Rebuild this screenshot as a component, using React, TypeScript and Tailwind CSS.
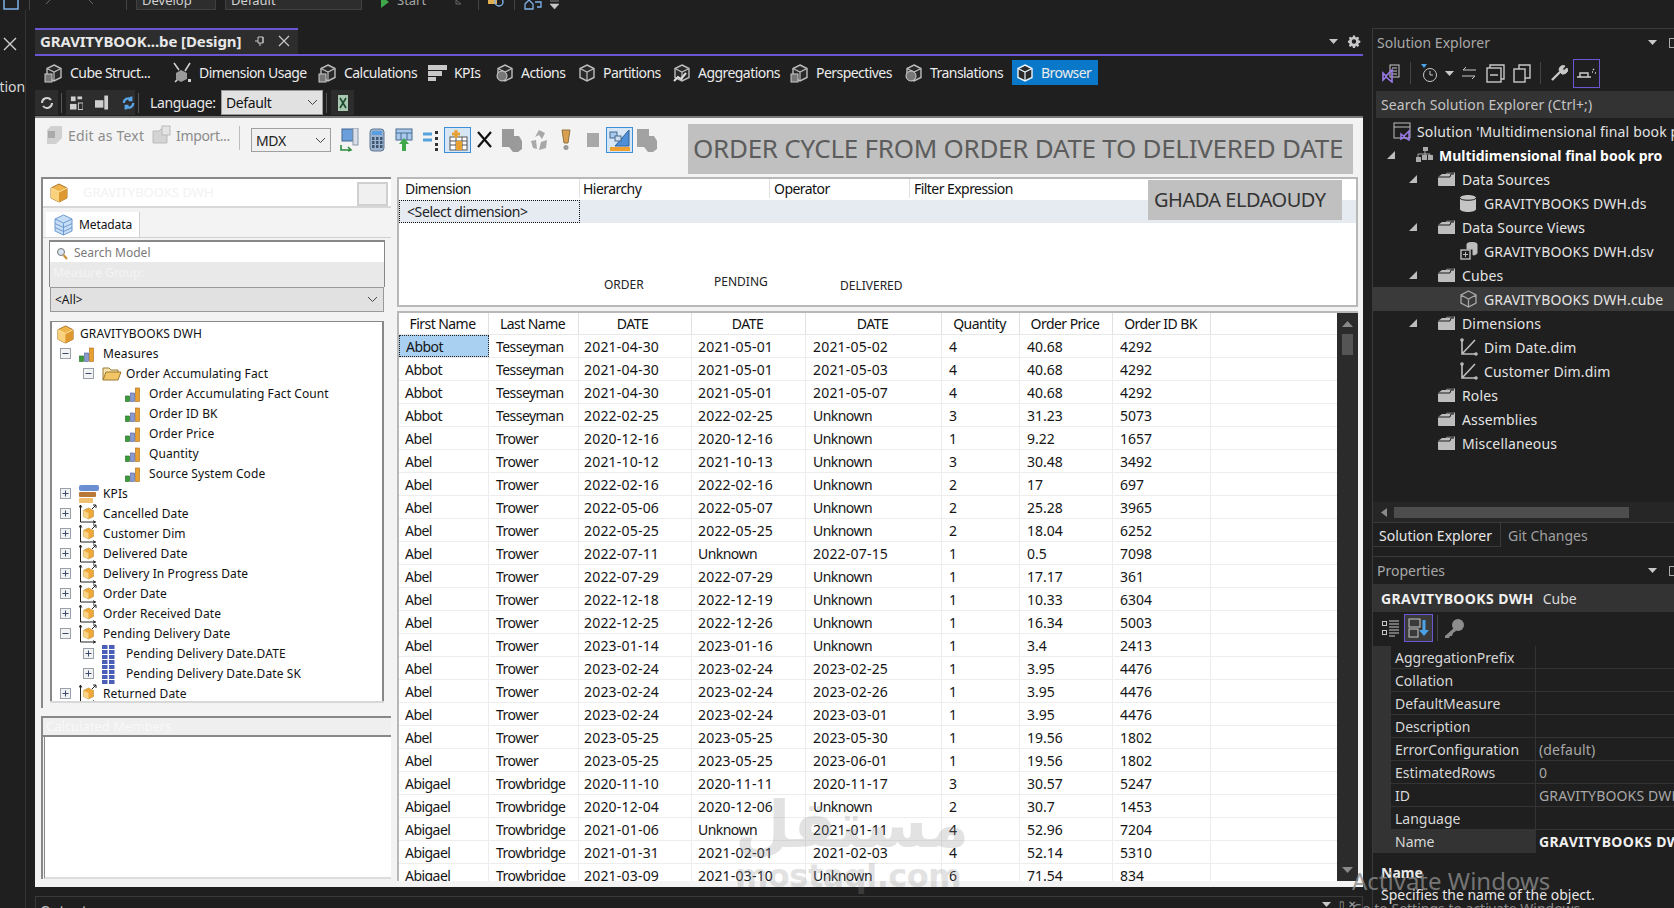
import React from "react";

const F = "font-['Noto_Sans','Open_Sans',sans-serif]";

const rowsRaw = `Abbot|Tesseyman|2021-04-30|2021-05-01|2021-05-02|4|40.68|4292
Abbot|Tesseyman|2021-04-30|2021-05-01|2021-05-03|4|40.68|4292
Abbot|Tesseyman|2021-04-30|2021-05-01|2021-05-07|4|40.68|4292
Abbot|Tesseyman|2022-02-25|2022-02-25|Unknown|3|31.23|5073
Abel|Trower|2020-12-16|2020-12-16|Unknown|1|9.22|1657
Abel|Trower|2021-10-12|2021-10-13|Unknown|3|30.48|3492
Abel|Trower|2022-02-16|2022-02-16|Unknown|2|17|697
Abel|Trower|2022-05-06|2022-05-07|Unknown|2|25.28|3965
Abel|Trower|2022-05-25|2022-05-25|Unknown|2|18.04|6252
Abel|Trower|2022-07-11|Unknown|2022-07-15|1|0.5|7098
Abel|Trower|2022-07-29|2022-07-29|Unknown|1|17.17|361
Abel|Trower|2022-12-18|2022-12-19|Unknown|1|10.33|6304
Abel|Trower|2022-12-25|2022-12-26|Unknown|1|16.34|5003
Abel|Trower|2023-01-14|2023-01-16|Unknown|1|3.4|2413
Abel|Trower|2023-02-24|2023-02-24|2023-02-25|1|3.95|4476
Abel|Trower|2023-02-24|2023-02-24|2023-02-26|1|3.95|4476
Abel|Trower|2023-02-24|2023-02-24|2023-03-01|1|3.95|4476
Abel|Trower|2023-05-25|2023-05-25|2023-05-30|1|19.56|1802
Abel|Trower|2023-05-25|2023-05-25|2023-06-01|1|19.56|1802
Abigael|Trowbridge|2020-11-10|2020-11-11|2020-11-17|3|30.57|5247
Abigael|Trowbridge|2020-12-04|2020-12-06|Unknown|2|30.7|1453
Abigael|Trowbridge|2021-01-06|Unknown|2021-01-11|4|52.96|7204
Abigael|Trowbridge|2021-01-31|2021-02-01|2021-02-03|4|52.14|5310
Abigael|Trowbridge|2021-03-09|2021-03-10|Unknown|6|71.54|834`;
const rows = rowsRaw.split("\n").map((r) => r.split("|"));
const colW = ["w-[90px]", "w-[90px]", "w-[113px]", "w-[114px]", "w-[136px]", "w-[78px]", "w-[93px]", "w-[98px]"];
const cellPl = ["pl-[6px]", "pl-[7px]", "pl-[5px]", "pl-[6px]", "pl-[7px]", "pl-[7px]", "pl-[7px]", "pl-[7px]"];
const heads = ["First Name", "Last Name", "DATE", "DATE", "DATE", "Quantity", "Order Price", "Order ID BK"];
const trackOf = (c: string) =>
  /^\d{4}-\d\d-\d\d$/.test(c) ? "tracking-[0.2px]" : /^[\d.]+$/.test(c) ? "tracking-[0px]" : "tracking-[-0.55px]";

/* ---------- icons ---------- */
const GoldCube = ({ s = 20 }: { s?: number }) => (
  <svg width={s} height={s} viewBox="0 0 20 20" className="shrink-0">
    <path d="M10 1 18 5v10l-8 4-8-4V5z" fill="#f0b54a" stroke="#a8762a" strokeWidth="1" />
    <path d="M2 5l8 4v10l-8-4z" fill="#fad27e" />
    <path d="M10 9l8-4v10l-8 4z" fill="#dd982f" />
    <path d="M2 5l8 4 8-4" fill="none" stroke="#fbe3a8" strokeWidth="1" />
  </svg>
);
const Bars = () => (
  <svg width="15" height="15" viewBox="0 0 15 15" className="shrink-0">
    <rect x="0.5" y="9" width="4" height="5.5" fill="#3c9a3c" stroke="#1c6a1c" strokeWidth="0.6" />
    <rect x="5.5" y="6" width="4" height="8.5" fill="#8a9ad0" stroke="#4d5d95" strokeWidth="0.6" />
    <rect x="10.5" y="1" width="4" height="13.5" fill="#e8a030" stroke="#a86a10" strokeWidth="0.6" />
  </svg>
);
const Folder = () => (
  <svg width="20" height="16" viewBox="0 0 20 16" className="shrink-0">
    <path d="M1 14V2h6l2 2h7v2" fill="#f7e3b0" stroke="#9a7a30" />
    <path d="M1 14 4 6h15l-3 8z" fill="#f4c566" stroke="#9a7a30" />
  </svg>
);
const KpiIcon = () => (
  <svg width="20" height="20" viewBox="0 0 20 20" className="shrink-0">
    <rect x="0" y="1" width="20" height="6" rx="2" fill="#6a8fd0" />
    <rect x="0" y="8" width="17" height="5" rx="1" fill="#b87838" />
    <rect x="0" y="14" width="14" height="5" rx="1" fill="#f0c070" />
  </svg>
);
const DimIcon = () => (
  <svg width="18" height="20" viewBox="0 0 18 20" className="shrink-0">
    <path d="M1.500 1v17h15M1.500 1 .2 3.500M1.500 1 2.800 3.500M16.500 18l-2.500-1.300M16.500 18l-2.500 1.300M13 5l4-4M14 1h3v3" fill="none" stroke="#222" strokeWidth="1" />
    <path d="M9.500 4l5 2.500v6l-5 2.500-5-2.500v-6z" fill="#eda93a" stroke="#b07a20" strokeWidth="0.5" />
    <path d="M4.500 6.500l5 2.500v6l-5-2.500z" fill="#f9d58a" />
  </svg>
);
const GridIcon = () => (
  <svg width="13" height="19" viewBox="0 0 13 19" className="shrink-0">
    {[0, 5, 10, 15].map((y) =>
      [0, 7].map((x) => <rect key={`${x}${y}`} x={x} y={y} width="5.5" height="4" fill="#4b5fb8" />)
    )}
  </svg>
);
const PM = ({ open }: { open?: boolean }) => (
  <svg width="11" height="11" viewBox="0 0 11 11" className="shrink-0">
    <rect x="0.5" y="0.5" width="10" height="10" fill="#f2f2f2" stroke="#9aa0a8" />
    <path d={open ? "M2.5 5.5h6" : "M2.5 5.5h6M5.5 2.5v6"} stroke="#3a4a70" />
  </svg>
);
const Chevron = () => (
  <svg width="11" height="7" viewBox="0 0 11 7" className="shrink-0">
    <path d="M1 1l4.5 4.5L10 1" fill="none" stroke="#444" />
  </svg>
);
const TabCube = ({ kind = 0, c = "#bdbdbd" }: { kind?: number; c?: string }) => (
  <svg width="20" height="20" viewBox="0 0 20 20" fill="none" stroke={c} className="shrink-0">
    <path d="M10 2l7 3.5v9L10 18l-7-3.5v-9z" fill="#2a2a2a" strokeWidth="1.4" />
    <path d="M3 5.5 10 9l7-3.5M10 9v9" strokeWidth="1.2" />
    {kind === 1 && <rect x="1" y="11" width="7" height="8" fill="#777" stroke="#ccc" />}
    {kind === 2 && <circle cx="7" cy="13" r="5" fill="#777" stroke="#ccc" />}
    {kind === 3 && <path d="M2 18l4-4 3 2 5-6" stroke="#ddd" strokeWidth="2" />}
  </svg>
);
const KpiTab = () => (
  <svg width="19" height="18" viewBox="0 0 19 18" className="shrink-0">
    <rect x="0" y="1" width="19" height="5" fill="#c8c8c8" />
    <rect x="0" y="7" width="14" height="5" fill="#c8c8c8" />
    <rect x="0" y="13" width="8" height="4" fill="#c8c8c8" />
  </svg>
);
const DimUsage = () => (
  <svg width="20" height="22" viewBox="0 0 20 22" fill="none" className="shrink-0">
    <path d="M1 1l5 7M17 1l-5 8M2 20l3-3" stroke="#cfcfcf" strokeWidth="1.6" />
    <path d="M8 8l6 3v6l-6 3-5-3v-6z" fill="#9a9a9a" />
    <rect x="15" y="17" width="3" height="3" fill="#cfcfcf" />
  </svg>
);
const SFolder = () => (
  <svg width="18" height="16" viewBox="0 0 18 16" className="shrink-0">
    <path d="M0 6 4 3h4l1-1.5h8V15H1a1 1 0 0 1-1-1z" fill="#bdbdbd" />
    <path d="M0 6h12l1-3h3" fill="none" stroke="#1f1f1f" />
    <path d="M9 2h7" stroke="#1f1f1f" />
  </svg>
);
const Tri = () => (
  <svg width="8" height="8" viewBox="0 0 8 8" className="shrink-0">
    <path d="M8 0v8H0z" fill="#bdbdbd" />
  </svg>
);
const DimFile = () => (
  <svg width="18" height="18" viewBox="0 0 18 18" fill="none" stroke="#bdbdbd" strokeWidth="1.6" className="shrink-0">
    <path d="M2 1v15h14M2 16 15 2" />
    <circle cx="2" cy="2" r="1" fill="#bdbdbd" />
    <circle cx="16" cy="16" r="1" fill="#bdbdbd" />
  </svg>
);
const Drop = ({ c = "#c8c8c8" }: { c?: string }) => (
  <svg width="9" height="5" viewBox="0 0 9 5" className="shrink-0">
    <path d="M0 0h9L4.5 5z" fill={c} />
  </svg>
);

/* toolbar icons on the light strip */
const TB = [
  <svg key="0" width="20" height="24" viewBox="0 0 20 24"><rect x="2" y="1" width="11" height="12" fill="#6a9fdc" stroke="#44668f" /><rect x="13" y="0" width="5" height="17" fill="#d8dfe8" stroke="#8a97a8" /><path d="M1 17v5h10M8 19l3 3-3 1" fill="none" stroke="#2e8a3c" strokeWidth="1.6" /></svg>,
  <svg key="1" width="16" height="24" viewBox="0 0 16 24"><rect x="1" y="1" width="14" height="22" rx="3" fill="#9cb4d0" stroke="#5f7690" /><rect x="3" y="3" width="10" height="4" fill="#5a9ee0" />{[9, 13, 17].map((y) => [3, 7, 11].map((x) => <rect key={`${x}${y}`} x={x} y={y} width="2.5" height="3" fill="#405670" />))}</svg>,
  <svg key="2" width="18" height="24" viewBox="0 0 18 24"><rect x="1" y="1" width="16" height="11" fill="#a8c8ec" stroke="#4b6d92" /><path d="M1 5h16M6 5v7M12 5v7" stroke="#4b6d92" /><path d="M9 10l5 6h-3v7H7v-7H4z" fill="#3ea84a" /></svg>,
  <svg key="3" width="18" height="22" viewBox="0 0 18 22"><path d="M1 5h9M1 11h9" stroke="#55a3dc" strokeWidth="3" /><rect x="13" y="2" width="3" height="3" fill="#333" /><rect x="13" y="8" width="3" height="3" fill="#333" /><rect x="13" y="14" width="3" height="3" fill="#333" /><rect x="13" y="19" width="3" height="3" fill="#333" /></svg>,
  <svg key="4" width="20" height="22" viewBox="0 0 20 22"><rect x="2" y="8" width="17" height="13" fill="#fff" stroke="#555" /><path d="M2 12h17M2 16h17M8 8v13M14 8v13" stroke="#555" /><rect x="8" y="12" width="6" height="9" fill="#e8a030" /><path d="M8 1v8M4 5h8" stroke="#e8a030" strokeWidth="3" /></svg>,
  <svg key="5" width="17" height="22" viewBox="0 0 17 22"><path d="M2 3l13 15M15 3 2 18" stroke="#111" strokeWidth="2.2" /></svg>,
  <svg key="6" width="22" height="26" viewBox="0 0 22 26"><path d="M1 2h12v7h5l3 5v8l-4 3h-5l-4-5H1z" fill="#9a9a9a" /></svg>,
  <svg key="7" width="20" height="24" viewBox="0 0 20 24"><path d="M10 2l6 3-3 6-3-4-4 2zM2 13l5-1 1 9-4-1zM10 22l2-8 6-2-1 8z" fill="#a8a8a8" /></svg>,
  <svg key="8" width="10" height="22" viewBox="0 0 10 22"><path d="M1 1h8l-2 13H3z" fill="#d8a050" stroke="#90733f" /><circle cx="5" cy="18.5" r="2.5" fill="#9a9a9a" /></svg>,
  <svg key="9" width="12" height="14" viewBox="0 0 12 14"><rect width="12" height="14" fill="#a8a8a8" /></svg>,
  <svg key="10" width="22" height="24" viewBox="0 0 22 24"><path d="M20 2v16H6z" fill="#4e8fd8" stroke="#2d5f96" /><rect x="1" y="4" width="7" height="6" fill="#a8c8ec" stroke="#44668f" /><rect x="6" y="8" width="6" height="5" fill="#d0dff0" stroke="#44668f" /><rect x="1" y="19" width="20" height="4" fill="#f0a030" /></svg>,
  <svg key="11" width="22" height="26" viewBox="0 0 22 26"><path d="M1 2h12v7h5l3 5v8l-4 3h-5l-4-5H1z" fill="#a2a2a2" /></svg>,
];

const TreeRow = ({ indent, pm, icon, text }: { indent: number; pm?: "o" | "c"; icon: React.ReactNode; text: string }) => (
  <div className="h-[20px] flex items-center relative shrink-0" style={{ paddingLeft: indent }}>
    {pm && <span className="absolute top-[4px] -ml-[19px]"><PM open={pm === "o"} /></span>}
    <span className="w-[24px] h-[20px] flex items-center shrink-0">{icon}</span>
    <span className="text-[12px] tracking-[0.1px] text-[#111] whitespace-nowrap">{text}</span>
  </div>
);

const SRow = ({ pl, tri, icon, text, bold, hl }: { pl: number; tri?: number; icon: React.ReactNode; text: string; bold?: boolean; hl?: boolean }) => (
  <div className={`h-[24px] flex items-center relative whitespace-nowrap ${hl ? "bg-[#3a3a3a]" : ""}`} style={{ paddingLeft: pl }}>
    {tri !== undefined && <span className="absolute top-[8px]" style={{ left: tri }}><Tri /></span>}
    <span className="w-[24px] flex items-center shrink-0">{icon}</span>
    <span className={`text-[14px] ${bold ? "font-bold text-white" : "text-[#e4e4e4] tracking-[0.15px]"}`}>{text}</span>
  </div>
);

const DTab = ({ w, icon, text, active }: { w: string; icon: React.ReactNode; text: string; active?: boolean }) => (
  <div className={`${w} h-[25px] flex items-center shrink-0 ${active ? "bg-[#0a78c8] pl-[3px]" : ""}`}>
    <span className="w-[26px] flex items-center shrink-0">{icon}</span>
    <span className="text-[14px] tracking-[-0.55px] text-[#ececec] whitespace-nowrap">{text}</span>
  </div>
);

export default function App() {
  const props: [string, string][] = [
    ["AggregationPrefix", ""],
    ["Collation", ""],
    ["DefaultMeasure", ""],
    ["Description", ""],
    ["ErrorConfiguration", "(default)"],
    ["EstimatedRows", "0"],
    ["ID", "GRAVITYBOOKS DWH"],
    ["Language", ""],
  ];
  return (
    <div className={`${F} w-[1674px] h-[908px] bg-[#1f1f1f] overflow-hidden relative flex flex-col`}>
      {/* top command bar */}
      <div className="h-[10px] shrink-0 flex items-end relative overflow-hidden">
        <svg width="18" height="10" viewBox="0 0 18 10" className="ml-[3px] shrink-0"><rect x="1" y="-8" width="14" height="17" fill="none" stroke="#7fb2e8" strokeWidth="1.5" /></svg>
        <span className="w-px h-[10px] bg-[#444] ml-[8px]" />
        <svg width="8" height="8" viewBox="0 0 8 8" className="ml-[15px] self-start shrink-0"><path d="M1 4l4-4" stroke="#666" /></svg>
        <svg width="8" height="8" viewBox="0 0 8 8" className="ml-[33px] self-start shrink-0"><path d="M7 4 3 0" stroke="#666" /></svg>
        <span className="w-px h-[10px] bg-[#444] ml-[32px]" />
        <div className="ml-[9px] w-[80px] h-[10px] bg-[#2d2d2d] border-b border-x border-[#404040] relative"><span className="absolute left-[5px] -top-[9px] text-[13px] text-[#d0d0d0]">Develop</span></div>
        <div className="ml-[9px] w-[137px] h-[10px] bg-[#2d2d2d] border-b border-x border-[#404040] relative"><span className="absolute left-[5px] -top-[9px] text-[13px] text-[#d0d0d0]">Default</span></div>
        <div className="ml-[15px] w-[78px] h-[10px] relative shrink-0"><svg width="10" height="10" viewBox="0 0 10 10" className="absolute top-0 left-[3px]"><path d="M1 -4l8 6-8 6z" fill="#3ea84a" /></svg><span className="absolute left-[20px] -top-[9px] text-[13px] text-[#a8a8a8]">Start</span></div>
        <svg width="8" height="8" viewBox="0 0 8 8" className="self-start shrink-0"><path d="M1 0l5 4H1z" fill="none" stroke="#666" /></svg>
        <span className="w-px h-[10px] bg-[#444] ml-[15px]" />
        <svg width="18" height="10" viewBox="0 0 18 10" className="ml-[8px] shrink-0"><rect x="1" y="-4" width="9" height="8" fill="#e0b050" /><circle cx="12" cy="2" r="4" fill="none" stroke="#7fb2e8" strokeWidth="1.4" /></svg>
        <span className="w-px h-[10px] bg-[#444] ml-[9px]" />
        <svg width="18" height="10" viewBox="0 0 18 10" className="ml-[9px] shrink-0"><path d="M1 4l4-4 4 4v5H1zM11 2h6v5h-4" fill="none" stroke="#7fb2e8" strokeWidth="1.3" /></svg>
        <svg width="9" height="10" viewBox="0 0 9 10" className="ml-[8px] shrink-0"><path d="M0 1h9M0 4h9l-4.500 5z" fill="#c8c8c8" stroke="#c8c8c8" strokeWidth="0.6" /></svg>
      </div>

      <div className="flex flex-1 min-h-0 pt-[18px]">
        {/* left collapsed tool strip */}
        <div className="w-[26px] shrink-0 border-r border-[#333] flex flex-col text-[#d8d8d8] overflow-hidden -mt-[18px] pt-[27px]">
          <svg width="14" height="14" viewBox="0 0 14 14" className="ml-[3px] shrink-0"><path d="M1 1l12 12M13 1 1 13" stroke="#d0d0d0" strokeWidth="1.4" /></svg>
          <span className="text-[14px] -ml-[29px] whitespace-nowrap mt-[25px]">Solution</span>
        </div>
        <div className="w-[9px] shrink-0" />

        {/* centre document */}
        <div className="w-[1328px] shrink-0 flex flex-col">
          <div className="h-[26px] shrink-0 flex">
            <div className="w-[263px] bg-[#2d2d2d] border-t-2 border-[#6b57d6] flex items-center pl-[5px] pb-[2px]">
              <span className="text-[15px] font-bold text-[#e8e8e8] tracking-[-0.1px] whitespace-nowrap">GRAVITYBOOK...be [Design]</span>
              <svg width="12" height="12" viewBox="0 0 12 12" className="ml-[13px] shrink-0"><path d="M4 2h5v6H4zM1 6h3M6 8v3M9 2v6" fill="none" stroke="#c8c8c8" /></svg>
              <svg width="12" height="12" viewBox="0 0 12 12" className="ml-[12px] shrink-0"><path d="M1 1l10 10M11 1 1 11" stroke="#c8c8c8" strokeWidth="1.2" /></svg>
            </div>
            <div className="flex-1 flex items-center justify-end pr-[2px] gap-[10px]">
              <Drop />
              <svg width="13" height="13" viewBox="0 0 24 24" fill="#c8c8c8"><path d="M10 1h4l.6 3 2.400 1 2.600-1.700 2.800 2.800L20.700 8.700l1 2.300 3 .6v4l-3 .6-1 2.400 1.700 2.600-2.800 2.800-2.600-1.700-2.400 1-.6 3h-4l-.6-3-2.400-1-2.600 1.700-2.800-2.800 1.700-2.600-1-2.400-3-.6v-4l3-.6 1-2.300L1.600 6.100l2.800-2.800L7 5l2.400-1zM12 8.500a4.500 4.500 0 1 0 0 9 4.500 4.500 0 0 0 0-9z" transform="scale(.92)" /></svg>
            </div>
          </div>
          <div className="h-[2px] shrink-0 bg-[#6b57d6]" />

          {/* designer tabs */}
          <div className="h-[34px] shrink-0 flex items-start pt-[4px] pl-[9px]">
            <DTab w="w-[129px]" icon={<TabCube kind={1} />} text="Cube Struct..." />
            <DTab w="w-[145px]" icon={<DimUsage />} text="Dimension Usage" />
            <DTab w="w-[110px]" icon={<TabCube kind={1} />} text="Calculations" />
            <DTab w="w-[67px]" icon={<KpiTab />} text="KPIs" />
            <DTab w="w-[82px]" icon={<TabCube kind={2} />} text="Actions" />
            <DTab w="w-[95px]" icon={<TabCube />} text="Partitions" />
            <DTab w="w-[118px]" icon={<TabCube kind={3} />} text="Aggregations" />
            <DTab w="w-[114px]" icon={<TabCube kind={1} />} text="Perspectives" />
            <DTab w="w-[108px]" icon={<TabCube kind={2} />} text="Translations" />
            <DTab w="w-[86px]" icon={<TabCube c="#e8f4ff" />} text="Browser" active />
          </div>

          {/* language row */}
          <div className="h-[26px] shrink-0 flex items-center pb-[1px]">
            <div className="w-[23px] h-[25px] bg-[#2d2d2d] flex items-center justify-center"><svg width="16" height="16" viewBox="0 0 16 16" fill="none" stroke="#cfcfcf" strokeWidth="2"><path d="M3 8a5 5 0 0 1 9-3M13 8a5 5 0 0 1-9 3" /></svg></div>
            <span className="w-px h-[20px] bg-[#555] ml-[3px]" />
            <div className="ml-[4px] w-[69px] h-[25px] bg-[#2d2d2d] flex items-center gap-[12px] pl-[4px]">
              <svg width="14" height="16" viewBox="0 0 14 16" fill="#cfcfcf"><rect x="1" y="1" width="5" height="5" /><rect x="8" y="1" width="5" height="3" /><rect x="0" y="9" width="7" height="6" /><rect x="9" y="8" width="5" height="7" fill="none" stroke="#cfcfcf" /></svg>
              <svg width="16" height="18" viewBox="0 0 16 18" fill="#cfcfcf"><rect x="0" y="6" width="9" height="8" /><rect x="10" y="1" width="4" height="15" /></svg>
              <svg width="14" height="16" viewBox="0 0 14 16" fill="none" stroke="#58a6e8" strokeWidth="2.400"><path d="M2 8a5 5 0 0 1 8-4M12 8a5 5 0 0 1-8 4M10 1v4h-3M4 15v-4h3" /></svg>
            </div>
            <span className="w-px h-[20px] bg-[#555] ml-[3px]" />
            <span className="ml-[11px] text-[14px] tracking-[-0.4px] text-[#e8e8e8] whitespace-nowrap w-[71px]">Language:</span>
            <div className="w-[102px] h-[25px] bg-[#e1e1e1] flex items-center justify-between px-[4px] text-[14px] tracking-[-0.4px] text-[#111] border border-[#999]">Default<Chevron /></div>
            <span className="w-px h-[20px] bg-[#555] ml-[3px]" />
            <div className="ml-[4px] w-[23px] h-[25px] bg-[#2d2d2d] flex items-center justify-center"><svg width="10" height="16" viewBox="0 0 10 16"><rect width="10" height="16" fill="#a8c8b0" /><path d="M2 3l6 10M8 3 2 13" stroke="#1c4a30" strokeWidth="1.6" /></svg></div>
          </div>

          {/* white designer surface */}
          <div className="h-[771px] shrink-0 bg-[#f3f3f3] border-t-2 border-[#7a7a7a] flex flex-col relative">
            {/* browser toolbar */}
            <div className="h-[59px] shrink-0 flex items-start pl-[10px] pt-[8px] text-[14px] text-[#8c8c8c]">
              <div className="flex items-center h-[20px] w-[194px] -mt-[1px]">
                <svg width="18" height="20" viewBox="0 0 18 20" className="shrink-0"><path d="M6 1h11v12l-6 6H2V5z" fill="#d0d0d0" /><rect x="3" y="6" width="7" height="7" fill="#aaa" /></svg>
                <span className="ml-[5px] w-[84px] tracking-[0.2px] whitespace-nowrap">Edit as Text</span>
                <svg width="20" height="20" viewBox="0 0 20 20" className="shrink-0"><path d="M1 18V6h6l2-2h6v14z" fill="#d4d4d4" stroke="#bbb" /><rect x="10" y="1" width="8" height="9" fill="#e4e4e4" stroke="#bbb" /></svg>
                <span className="ml-[4px] tracking-[-0.35px] whitespace-nowrap">Import...</span>
              </div>
              <span className="w-px h-[24px] bg-[#bcbcbc]" />
              <div className="ml-[11px] mt-[2px] w-[80px] h-[24px] border border-[#a0a0a0] bg-[#f0f0f0] flex items-center justify-between px-[4px] text-[#222] tracking-[-0.35px]">MDX<Chevron /></div>
              <div className="flex ml-[5px] h-[28px] mt-[1px]">
                {TB.map((ic, i) => (
                  <div key={i} className={`w-[27px] h-[26px] flex items-center justify-center shrink-0 ${i === 4 || i === 10 ? "border border-[#3b8fd8] bg-[#d6e6f5]" : ""}`}>{ic}</div>
                ))}
              </div>
            </div>

            <div className="flex flex-1 min-h-0 pl-[6px] pr-[5px] pb-[6px]">
              {/* left metadata column */}
              <div className="w-[350px] shrink-0 flex flex-col">
                <div className="h-[531px] shrink-0 border-2 border-[#888] border-b-0 border-r-0 flex flex-col relative">
                  <div className="h-[29px] bg-white border-b-2 border-[#d8d8d8] flex items-center pl-[6px] relative shrink-0">
                    <GoldCube s={20} />
                    <span className="ml-[14px] text-[13px] text-[#f2f2f2]">GRAVITYBOOKS DWH</span>
                    <div className="absolute right-[3px] top-[3px] w-[31px] h-[24px] border-2 border-[#d0d0d0] bg-[#f0f0f0]" />
                  </div>
                  <div className="h-[4px] shrink-0" />
                  <div className="h-[26px] shrink-0 flex border-b border-[#d0d0d0] pl-[3px]">
                    <div className="w-[94px] bg-white flex items-center pl-[8px] gap-[6px] border-r border-[#d0d0d0]">
                      <svg width="19" height="22" viewBox="0 0 19 22"><path d="M9.500 1 18 5v12l-8.500 4L1 17V5z" fill="#c6def6" stroke="#6d9ad0" /><path d="M1 5l8.500 4L18 5M1 9.500l8.500 4 8.500-4M1 13.500l8.500 4 8.500-4M9.500 9v12" fill="none" stroke="#6d9ad0" /></svg>
                      <span className="text-[12px] tracking-[-0.1px] text-[#111]">Metadata</span>
                    </div>
                  </div>
                  <div className="mx-[6px] mt-[2px] h-[47px] shrink-0 border-t-2 border-x border-[#888] bg-[#e9e9e9] flex flex-col">
                    <div className="h-[20px] bg-white flex items-center pl-[6px] pt-[2px] gap-[6px] shrink-0">
                      <svg width="12" height="13" viewBox="0 0 12 13" fill="none"><circle cx="5" cy="5" r="3.500" stroke="#777" fill="#d8e4f0" /><path d="M7.500 8l3.500 4" stroke="#c99030" strokeWidth="2" /></svg>
                      <span className="text-[12px] text-[#7a7a7a]">Search Model</span>
                    </div>
                    <span className="text-[12px] text-[#f4f4f4] pl-[3px] pt-[2px]">Measure Group:</span>
                  </div>
                  <div className="mx-[7px] h-[25px] shrink-0 bg-[#e1e1e1] border border-[#999] flex items-center justify-between pl-[4px] pr-[5px] text-[12px] text-[#111]">&lt;All&gt;<Chevron /></div>
                  <div className="h-[9px] shrink-0" />
                  <div className="mx-[7px] flex-1 min-h-0 bg-white border-x-2 border-t border-[#888] border-b-0 overflow-hidden flex flex-col pt-[2px]">
                    <TreeRow indent={4} icon={<GoldCube s={19} />} text="GRAVITYBOOKS DWH" />
                    <TreeRow indent={27} pm="o" icon={<Bars />} text="Measures" />
                    <TreeRow indent={50} pm="o" icon={<Folder />} text="Order Accumulating Fact" />
                    <TreeRow indent={73} icon={<Bars />} text="Order Accumulating Fact Count" />
                    <TreeRow indent={73} icon={<Bars />} text="Order ID BK" />
                    <TreeRow indent={73} icon={<Bars />} text="Order Price" />
                    <TreeRow indent={73} icon={<Bars />} text="Quantity" />
                    <TreeRow indent={73} icon={<Bars />} text="Source System Code" />
                    <TreeRow indent={27} pm="c" icon={<KpiIcon />} text="KPIs" />
                    <TreeRow indent={27} pm="c" icon={<DimIcon />} text="Cancelled Date" />
                    <TreeRow indent={27} pm="c" icon={<DimIcon />} text="Customer Dim" />
                    <TreeRow indent={27} pm="c" icon={<DimIcon />} text="Delivered Date" />
                    <TreeRow indent={27} pm="c" icon={<DimIcon />} text="Delivery In Progress Date" />
                    <TreeRow indent={27} pm="c" icon={<DimIcon />} text="Order Date" />
                    <TreeRow indent={27} pm="c" icon={<DimIcon />} text="Order Received Date" />
                    <TreeRow indent={27} pm="o" icon={<DimIcon />} text="Pending Delivery Date" />
                    <TreeRow indent={50} pm="c" icon={<GridIcon />} text="Pending Delivery Date.DATE" />
                    <TreeRow indent={50} pm="c" icon={<GridIcon />} text="Pending Delivery Date.Date SK" />
                    <TreeRow indent={27} pm="c" icon={<DimIcon />} text="Returned Date" />
                  </div>
                  <div className="mx-[7px] h-[2px] bg-[#d8d8d8] shrink-0" />
                  <div className="h-[5px] shrink-0" />
                </div>
                <div className="h-[8px] shrink-0" />
                <div className="h-[163px] shrink-0 border-2 border-[#888] border-r-0 border-b-0 flex flex-col">
                  <div className="h-[19px] shrink-0 bg-[#efefef] text-[13px] leading-[17px] text-[#f8f8f8] pl-[3px] border-b-2 border-[#888] overflow-hidden">Calculated Members</div>
                  <div className="flex-1 bg-white ml-[1px] border-l border-[#888] border-b-2 border-b-[#ddd]" />
                </div>
              </div>

              <div className="w-[6px] shrink-0" />

              {/* right column */}
              <div className="w-[961px] shrink-0 flex flex-col">
                <div className="h-[130px] shrink-0 bg-white border-2 border-[#b8b8b8] flex flex-col relative">
                  <div className="h-[21px] shrink-0 flex items-center text-[14px] tracking-[-0.55px] text-[#111] pb-[2px]">
                    <span className="w-[181px] pl-[6px] border-r border-[#e0e0e0] h-full flex items-center">Dimension</span>
                    <span className="w-[190px] pl-[3px] border-r border-[#e0e0e0] h-full flex items-center">Hierarchy</span>
                    <span className="w-[140px] pl-[4px] border-r border-[#e0e0e0] h-full flex items-center">Operator</span>
                    <span className="pl-[4px]">Filter Expression</span>
                  </div>
                  <div className="h-[23px] shrink-0 bg-[#e6ebf2] flex">
                    <div className="w-[181px] border border-dotted border-[#111] pl-[7px] text-[14px] tracking-[-0.4px] text-[#222] flex items-center">&lt;Select dimension&gt;</div>
                  </div>
                  <span className="absolute left-[205px] top-[97px] text-[12px] text-[#222]">ORDER</span>
                  <span className="absolute left-[315px] top-[94px] text-[12px] text-[#222]">PENDING</span>
                  <span className="absolute left-[441px] top-[98px] text-[12px] text-[#222]">DELIVERED</span>
                </div>
                <div className="h-[4px] shrink-0" />

                <div className="flex-1 min-h-0 flex bg-white border-t-2 border-l-2 border-[#b8b8b8] relative overflow-hidden">
                  <div className="flex-1 min-w-0 overflow-hidden flex flex-col">
                    <div className="h-[22px] flex shrink-0 border-b border-[#e8e8e8]">
                      {heads.map((h, i) => (
                        <div key={i} className={`${colW[i]} shrink-0 flex items-center justify-center text-[14px] tracking-[-0.55px] text-[#111] border-r border-[#e0e0e0] ${i === 2 ? "pr-[5px]" : "pr-[2px]"}`}>{h}</div>
                      ))}
                    </div>
                    {rows.map((r, ri) => (
                      <div key={ri} className="h-[23px] flex shrink-0 border-b border-[#ededed]">
                        {r.map((c, ci) => (
                          <div key={ci} className={`${colW[ci]} ${cellPl[ci]} ${trackOf(c)} shrink-0 flex items-center text-[14px] text-[#151515] whitespace-nowrap ${ri === 0 && ci === 0 ? "bg-[#a9d0f1] border border-dotted border-[#222]" : "border-r border-[#ededed]"}`}>{c}</div>
                        ))}
                      </div>
                    ))}
                  </div>
                  <div className="w-[21px] shrink-0 bg-[#2b2b2b] flex flex-col items-center relative">
                    <svg width="11" height="6" viewBox="0 0 11 6" className="mt-[8px]"><path d="M5.500 0 11 6H0z" fill="#888" /></svg>
                    <div className="w-[11px] h-[21px] bg-[#555] mt-[7px]" />
                    <div className="flex-1" />
                    <svg width="11" height="6" viewBox="0 0 11 6" className="mb-[8px]"><path d="M5.500 6 11 0H0z" fill="#888" /></svg>
                  </div>
                </div>
              </div>
            </div>
          </div>

          <div className="h-[9px] shrink-0" />
          <div className="flex-1 border-t border-x border-[#3a3a3a] flex justify-between items-start pl-[4px] pr-[6px] overflow-hidden text-[#c8c8c8]">
            <span className="text-[14px] mt-[3px]">Output</span>
            <span className="flex gap-[8px] items-center"><Drop /><span className="text-[10px] text-[#aaa]">▯ ✕</span></span>
          </div>
        </div>

        <div className="w-[9px] shrink-0" />

        {/* right tool windows */}
        <div className="flex-1 min-w-0 flex flex-col border-l border-[#3a3a3a] border-t overflow-hidden">
          <div className="h-[29px] shrink-0 flex items-center pl-[4px] pb-[2px] justify-between whitespace-nowrap">
            <span className="text-[14px] text-[#a8a8a8]">Solution Explorer</span>
            <span className="flex items-center gap-[12px]"><Drop /><span className="w-[5px] h-[10px] border border-[#aaa] border-r-0" /></span>
          </div>
          <div className="h-[30px] shrink-0 flex items-center pl-[8px] mb-[3px]">
            <svg width="20" height="20" viewBox="0 0 20 20" fill="none" className="shrink-0"><rect x="9" y="2" width="9" height="12" stroke="#c8c8c8" /><path d="M11 5h5M11 8h5M11 11h5" stroke="#c8c8c8" /><path d="M2 10l3 3 6-6v12l-6-5-3 3z" stroke="#9b7bea" strokeWidth="1.600" /></svg>
            <span className="w-px h-[22px] bg-[#444] ml-[9px]" />
            <svg width="18" height="20" viewBox="0 0 18 20" fill="none" className="ml-[9px] shrink-0"><circle cx="10" cy="12" r="6.500" stroke="#c8c8c8" /><path d="M10 8v4h3" stroke="#c8c8c8" /><path d="M1 1h6L4 5z" fill="#4aa3e8" /></svg>
            <span className="ml-[7px]"><Drop /></span>
            <svg width="16" height="12" viewBox="0 0 16 12" fill="none" stroke="#c8c8c8" className="ml-[7px] shrink-0"><path d="M15 3H2l3-3M1 9h13l-3 3" /></svg>
            <svg width="19" height="19" viewBox="0 0 19 19" fill="none" stroke="#c8c8c8" strokeWidth="1.400" className="ml-[9px] shrink-0"><rect x="1" y="4" width="14" height="14" /><path d="M4 4V1h14v14h-3M4 11h8" /></svg>
            <svg width="18" height="19" viewBox="0 0 18 19" fill="none" stroke="#c8c8c8" strokeWidth="1.400" className="ml-[8px] shrink-0"><rect x="1" y="5" width="11" height="13" /><path d="M6 5V1h11v13h-5" /></svg>
            <span className="w-px h-[22px] bg-[#444] ml-[9px]" />
            <svg width="18" height="18" viewBox="0 0 18 18" fill="none" stroke="#c8c8c8" strokeWidth="2.400" className="ml-[9px] shrink-0"><path d="M2 16 10 8" /><path d="M10 8a4 4 0 0 1 5-6l-2.500 3 1.500 1.500L17 4a4 4 0 0 1-7 4z" fill="#c8c8c8" strokeWidth="1" /></svg>
            <div className="ml-[5px] w-[27px] h-[29px] border border-[#6b57d6] flex items-center justify-center shrink-0"><svg width="21" height="12" viewBox="0 0 21 12" fill="none" stroke="#d0d0d0"><path d="M1 10h14M4 10V6h8v4M17 2l1 1M19 6h1M16 5l1 0" strokeWidth="1.400" /></svg></div>
          </div>
          <div className="h-[27px] shrink-0 ml-[3px] bg-[#333333] flex items-center pl-[5px] text-[14px] tracking-[0.1px] text-[#c4c4c4] whitespace-nowrap">Search Solution Explorer (Ctrl+;)</div>

          <div className="h-[384px] shrink-0 pt-[1px] overflow-hidden whitespace-nowrap">
            <SRow pl={20} icon={<svg width="19" height="19" viewBox="0 0 19 19" fill="none" className="shrink-0"><rect x="1" y="1" width="16" height="15" stroke="#bdbdbd" /><path d="M1 5h16" stroke="#bdbdbd" /><path d="M8 12l3 2 5-5v9l-5-3-3 2z" fill="none" stroke="#9b7bea" strokeWidth="1.500" /></svg>} text="Solution 'Multidimensional final book pro" />
            <SRow pl={42} tri={14} icon={<svg width="18" height="16" viewBox="0 0 18 16" fill="#aaa" className="shrink-0"><rect x="8" y="0" width="5" height="4" /><rect x="1" y="10" width="5" height="5" /><rect x="7" y="8" width="5" height="5" /><rect x="13" y="8" width="5" height="5" /><path d="M10 4v4M3 10V7h12v1" stroke="#aaa" fill="none" /></svg>} text="Multidimensional final book pro" bold />
            <SRow pl={65} tri={36} icon={<SFolder />} text="Data Sources" />
            <SRow pl={87} icon={<svg width="16" height="17" viewBox="0 0 16 17" className="shrink-0"><path d="M0 3c0-4 16-4 16 0v11c0 4-16 4-16 0z" fill="#c4c4c4" /><path d="M0 3c0 3 16 3 16 0" fill="none" stroke="#1f1f1f" /></svg>} text="GRAVITYBOOKS DWH.ds" />
            <SRow pl={65} tri={36} icon={<SFolder />} text="Data Source Views" />
            <SRow pl={87} icon={<svg width="18" height="18" viewBox="0 0 18 18" fill="none" stroke="#bdbdbd" className="shrink-0"><rect x="1" y="8" width="9" height="9" strokeWidth="1.400" /><path d="M3 12.500h5M5.500 10v5" /><path d="M7 2c0-2 10-2 10 0v9c0 1-2 2-4 2V7H7z" fill="#bdbdbd" /></svg>} text="GRAVITYBOOKS DWH.dsv" />
            <SRow pl={65} tri={36} icon={<SFolder />} text="Cubes" />
            <SRow pl={87} hl icon={<svg width="17" height="18" viewBox="0 0 17 18" fill="none" stroke="#a8a8a8" strokeWidth="1.300" className="shrink-0"><path d="M8.500 1 16 5v8l-7.500 4L1 13V5zM1 5l7.500 4L16 5M8.500 9v8" /></svg>} text="GRAVITYBOOKS DWH.cube" />
            <SRow pl={65} tri={36} icon={<SFolder />} text="Dimensions" />
            <SRow pl={87} icon={<DimFile />} text="Dim Date.dim" />
            <SRow pl={87} icon={<DimFile />} text="Customer Dim.dim" />
            <SRow pl={65} icon={<SFolder />} text="Roles" />
            <SRow pl={65} icon={<SFolder />} text="Assemblies" />
            <SRow pl={65} icon={<SFolder />} text="Miscellaneous" />
          </div>

          <div className="h-[20px] shrink-0 bg-[#262626] flex items-center pl-[8px]">
            <svg width="6" height="9" viewBox="0 0 6 9" className="shrink-0"><path d="M6 0v9L0 4.500z" fill="#8a8a8a" /></svg>
            <div className="ml-[7px] w-[235px] h-[11px] bg-[#4d4d4d]" />
          </div>
          <div className="h-[25px] shrink-0 flex items-center border-t border-[#3a3a3a] text-[14px] whitespace-nowrap">
            <div className="w-[128px] h-full border-r border-b border-[#3a3a3a] flex items-center pl-[6px] pt-[1px] text-[#e8e8e8]">Solution Explorer</div>
            <span className="ml-[7px] pt-[1px] text-[#a0a0a0]">Git Changes</span>
          </div>
          <div className="h-[9px] shrink-0" />
          <div className="h-[28px] shrink-0 border-t border-[#3a3a3a] flex items-center pl-[4px] justify-between">
            <span className="text-[14px] text-[#a8a8a8]">Properties</span>
            <span className="flex items-center gap-[12px]"><Drop /><span className="w-[5px] h-[10px] border border-[#aaa] border-r-0" /></span>
          </div>
          <div className="h-[28px] shrink-0 bg-[#333333] flex items-center pl-[8px] text-[14px] whitespace-nowrap">
            <span className="font-bold text-[#f0f0f0] tracking-[0.4px]">GRAVITYBOOKS DWH</span>
            <span className="ml-[9px] text-[#d8d8d8]">Cube</span>
          </div>
          <div className="h-[34px] shrink-0 flex items-center pl-[9px] pb-[2px]">
            <svg width="17" height="17" viewBox="0 0 17 17" fill="none" stroke="#c8c8c8" className="shrink-0"><rect x="0.500" y="1.500" width="4" height="4" /><rect x="0.500" y="10.500" width="4" height="4" /><path d="M7 1h10M7 4h10M7 7h10M7 10h10M7 13h10M7 16h6" /></svg>
            <div className="ml-[5px] w-[29px] h-[28px] bg-[#3a3a3a] border border-[#6b57d6] flex items-center justify-center shrink-0"><svg width="21" height="20" viewBox="0 0 21 20" fill="none"><rect x="1" y="1" width="11" height="8" stroke="#c8c8c8" /><rect x="1" y="11" width="9" height="8" stroke="#c8c8c8" /><path d="M16 2v12" stroke="#4aa3e8" strokeWidth="3" /><path d="M11 12h10l-5 6z" fill="#4aa3e8" /></svg></div>
            <span className="w-px h-[26px] bg-[#444] ml-[4px]" />
            <svg width="21" height="21" viewBox="0 0 21 21" className="ml-[6px] shrink-0"><circle cx="14" cy="7" r="6" fill="#8c8c8c" /><path d="M10 10 1 18v2h4l1-2h2l1-3 3-2z" fill="#8c8c8c" /></svg>
          </div>
          <div className="shrink-0 flex flex-col text-[14px] whitespace-nowrap">
            {props.map(([k, v]) => (
              <div key={k} className="h-[23px] flex">
                <div className="w-[18px] bg-[#333333]" />
                <div className="w-[145px] pl-[4px] flex items-center border-b border-r border-[#333] text-[#d8d8d8]">{k}</div>
                <div className="flex-1 min-w-0 pl-[3px] flex items-center border-b border-[#333] text-[#a8a8a8] tracking-[0.15px] overflow-hidden">{v}</div>
              </div>
            ))}
            <div className="h-[23px] flex bg-[#333333]">
              <div className="w-[163px] pl-[22px] flex items-center text-[#d8d8d8] border-r border-[#333]">Name</div>
              <div className="flex-1 min-w-0 pl-[3px] flex items-center font-bold tracking-[0.4px] text-[#f0f0f0] bg-[#1f1f1f] overflow-hidden">GRAVITYBOOKS DWH</div>
            </div>
          </div>
          <div className="pl-[8px] pt-[9px] text-[14px] text-[#e8e8e8] whitespace-nowrap leading-[22px]">
            <div className="font-bold">Name</div>
            <div>Specifies the name of the object.</div>
          </div>
        </div>
      </div>

      {/* overlays pasted on the screenshot */}
      <div className="absolute left-[688px] top-[124px] w-[665px] h-[50px] bg-[#c0c0c0] flex items-center pl-[5px] pb-[1px] text-[26px] tracking-[-0.27px] text-[#5c5c5c] whitespace-nowrap overflow-hidden">ORDER CYCLE FROM ORDER DATE TO DELIVERED DATE</div>
      <div className="absolute left-[1148px] top-[180px] w-[194px] h-[40px] bg-[#c0c0c0] flex items-center pl-[6px] text-[20px] tracking-[-0.5px] text-[#333] whitespace-nowrap">GHADA ELDAOUDY</div>
      <div className="absolute left-[735px] top-[787px] w-[203px] text-center pointer-events-none font-['DejaVu_Sans',sans-serif] font-bold text-[#8f8f8f] opacity-25 whitespace-nowrap">
        <div className="text-[64px] leading-[76px]">مستقل</div>
        <div className="text-[32px] leading-[26px] tracking-[-0.5px]">mostaql.com</div>
      </div>
      <div className="absolute left-[1352px] top-[866px] text-[24px] leading-[30px] text-[#8a8a8a] opacity-80 whitespace-nowrap pointer-events-none">Activate Windows</div>
      <div className="absolute left-[1352px] top-[899px] text-[14px] leading-[20px] text-[#8a8a8a] whitespace-nowrap pointer-events-none">Go to Settings to activate Windows.</div>
    </div>
  );
}
